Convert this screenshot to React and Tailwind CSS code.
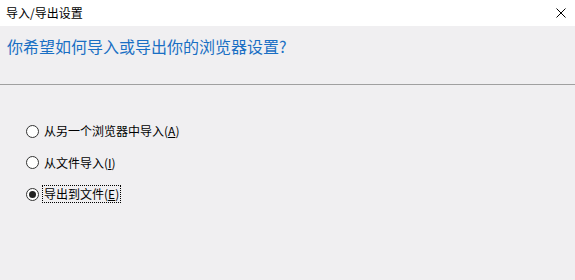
import React from "react";

const font = { fontFamily: '"Microsoft YaHei","Noto Sans CJK SC",sans-serif' };

function Radio({ checked, label, hotkey, focused }) {
  return (
    <div className="flex items-center h-[20px]">
      <span className="w-[13px] h-[13px] rounded-full border border-[#333] bg-white flex items-center justify-center mr-[4px]">
        {checked && <span className="w-[7px] h-[7px] rounded-full bg-[#222]" />}
      </span>
      <span className={"text-[12px] text-black leading-[16px] px-[1px] " + (focused ? "outline outline-1 outline-dotted outline-black" : "")}>
        {label}(<span className="underline">{hotkey}</span>)
      </span>
    </div>
  );
}

export default function App() {
  return (
    <div className="w-[575px] h-[280px] bg-[#f0eff1] flex flex-col overflow-hidden" style={font}>
      <div className="h-[26px] bg-white flex items-center justify-between pl-[6px] pr-[9px]">
        <span className="text-[12px] text-black">导入/导出设置</span>
        <svg width="10" height="10" viewBox="0 0 10 10">
          <path d="M0.5 0.5L9.5 9.5M9.5 0.5L0.5 9.5" stroke="#000" strokeWidth="1" />
        </svg>
      </div>
      <div className="h-[59px] pl-[7px] pt-[8px] border-b border-[#a0a0a0]">
        <div className="text-[16px] text-[#1a6fc4] leading-[24px]">你希望如何导入或导出你的浏览器设置?</div>
      </div>
      <div className="flex flex-col pl-[26px] pt-[36px] gap-[11.5px]">
        <Radio label="从另一个浏览器中导入" hotkey="A" />
        <Radio label="从文件导入" hotkey="I" />
        <Radio label="导出到文件" hotkey="E" checked focused />
      </div>
    </div>
  );
}
